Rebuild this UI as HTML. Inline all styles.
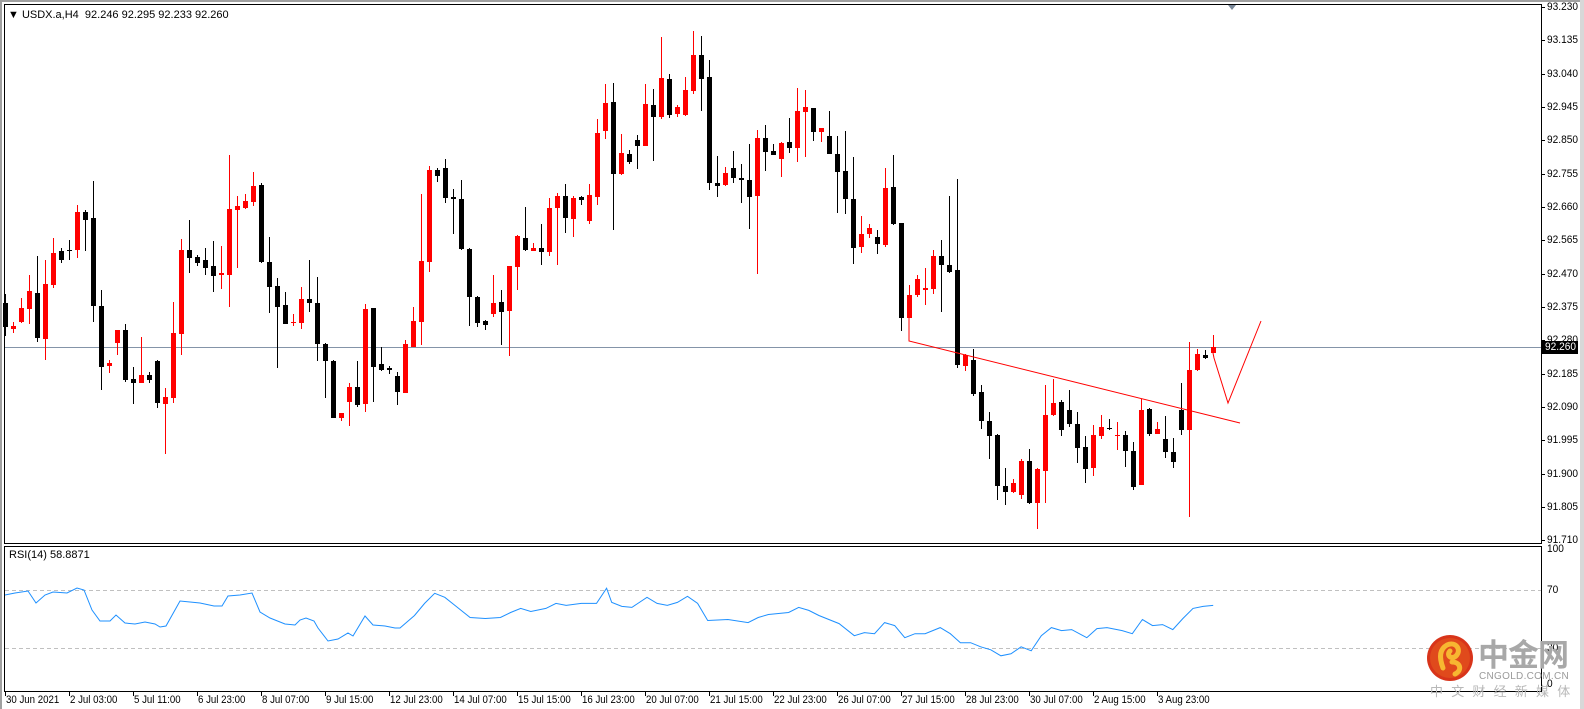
<!DOCTYPE html>
<html><head><meta charset="utf-8">
<style>
html,body{margin:0;padding:0;background:#fff;}
body{width:1584px;height:709px;position:relative;overflow:hidden;font-family:"Liberation Sans",sans-serif;}
.t{position:absolute;font-size:11px;color:#000;white-space:nowrap;line-height:12px;}
.pl{position:absolute;left:1547px;font-size:11px;line-height:12px;color:#000;transform:scaleX(0.92);transform-origin:0 0;}
.dl{position:absolute;top:694px;font-size:11px;line-height:12px;color:#000;white-space:nowrap;transform:scaleX(0.88);transform-origin:0 0;}
</style></head><body>
<svg id="s" width="1584" height="709" style="position:absolute;left:0;top:0" xmlns="http://www.w3.org/2000/svg">
<rect x="0" y="0" width="1584" height="2" fill="#a0a0a0"/>
<rect x="0" y="0" width="2" height="709" fill="#a0a0a0"/>
<rect x="1580" y="0" width="4" height="709" fill="#d8d8d8"/>
<rect x="4.5" y="4.5" width="1537" height="539" fill="none" stroke="#000"/>
<rect x="4.5" y="546.5" width="1537" height="145" fill="none" stroke="#000"/>
<line x1="5" y1="347.5" x2="1541" y2="347.5" stroke="#8494a8" stroke-width="1"/>
<polygon points="1228,5 1236,5 1232,10" fill="#7a8899"/>
<line x1="5" y1="590.5" x2="1541" y2="590.5" stroke="#c0c0c0" stroke-dasharray="4,3"/>
<line x1="5" y1="648.5" x2="1541" y2="648.5" stroke="#c0c0c0" stroke-dasharray="4,3"/>
<g id="c"></g>
<polyline points="909,318 909,341 1240,423" fill="none" stroke="#ff0000" stroke-width="1"/>
<polyline points="1213,353 1214,358 1228,403 1261,321" fill="none" stroke="#ff0000" stroke-width="1"/>
<polyline id="rsi" fill="none" stroke="#1e90ff" stroke-width="1"/>
<g id="ticks"></g>
<rect x="1542" y="341" width="36" height="13" fill="#000"/>
<circle cx="1450" cy="658" r="23" fill="#d8341a"/>
<circle cx="1450" cy="658" r="20" fill="#e04a1c"/>
<path d="M1443 668 C1440 660 1438 650 1447 645 C1456 641 1462 650 1456 656 C1451 660 1446 655 1450 651 M1452 662 C1460 662 1463 670 1455 674" fill="none" stroke="#f7b731" stroke-width="5" stroke-linecap="round"/>
</svg>
<div class="t" style="left:8px;top:9px">&#9660; USDX.a,H4&nbsp; 92.246 92.295 92.233 92.260</div>
<div class="t" style="left:9px;top:549px">RSI(14) 58.8871</div>
<div id="pls"></div>
<div class="pl" style="top:341px;color:#fff;left:1545px;">92.260</div>
<div class="pl" style="top:543px">100</div>
<div class="pl" style="top:584px">70</div>
<div class="pl" style="top:642px">30</div>
<div class="pl" style="top:678px">0</div>
<div style="position:absolute;left:1478px;top:636px;font-family:'Noto Sans CJK SC',sans-serif;font-size:31px;font-weight:bold;color:#a8a8a8;line-height:34px;letter-spacing:-1px">中金网</div>
<div style="position:absolute;left:1479px;top:671px;font-size:10px;color:#9a9a9a;line-height:11px;letter-spacing:0.3px">CNGOLD.COM.CN</div>
<div style="position:absolute;left:1430px;top:683px;font-family:'Noto Sans CJK SC',sans-serif;font-size:13px;color:#b8b8b8;line-height:15px;letter-spacing:8.2px">中文财经新媒体</div>
<div id="dls"></div>
<script>
var NS="http://www.w3.org/2000/svg";
function el(t,a,p){var e=document.createElementNS(NS,t);for(var k in a)e.setAttribute(k,a[k]);p.appendChild(e);return e;}
var g=document.getElementById('c');
var segs=[[140,[
[0,'k',462,588,490,562],[1,'r',545,578,558,566],[2,'r',474,550,504,546],[3,'r',405,552,453,507],[4,'k',348,606,459,594],[5,'r',360,660,432,597],[6,'r',294,444,339,435],[7,'k',324,369,333,360],[8,'k',300,360,329,332],[9,'r',195,354,216,330],[10,'k',210,333,216,240],[11,'k',123,546,234,498],[12,'k',450,750,498,681],[13,'r',660,699,669,678],[14,'r',570,645,570,609],[15,'k',552,726,570,720],[16,'k',681,792,717,729],[17,'r',591,729,705,729],[18,'k',696,729,705,720],[19,'k',660,804,663,789],[20,'r',744,942,771,792],[21,'r',486,789,579,774],[22,'r',297,645,330,582],[23,'k',240,399,330,354],[24,'k',345,378,351,369],[25,'k',324,405,360,384],[26,'k',303,456,378,408],[27,'r',318,447,399,405],[28,'r',45,501,207,405],[29,'r',168,384,198,210],[30,'r',162,207,183,204],[31,'r',96,198,138,186],[32,'k',129,369,135,366],[33,'k',291,519,366,441],[34,'k',414,684,438,501],[35,'k',456,552,495,552],[36,'r',522,558,546,549],[37,'r',441,567,477,549],[38,'k',360,516,477,489]]],
[30,[
[39,'k',741,993,819,942],[40,'k',939,1104,942,993],[41,'k',990,1164,993,1164],[42,'r',1149,1173,1149,1164],[43,'r',1059,1188,1071,1116],[44,'k',993,1131,1071,1125],[45,'r',822,1146,837,1122],[46,'k',834,1116,834,1011],[47,'k',951,1023,1002,1020],[48,'k',1008,1032,1014,1020],[49,'k',1026,1125,1038,1086],[50,'r',930,1089,942,1089],[51,'r',831,951,873,951],[52,'r',492,945,693,876],[53,'r',408,726,420,696],[54,'k',414,456,420,438],[55,'k',387,519,414,504],[56,'k',477,612,501,507],[57,'k',450,660,507,657],[58,'k',654,888,657,801],[59,'k',798,891,801,879],[60,'k',870,900,873,885],[61,'r',735,861,819,852],[62,'k',780,945,816,846],[63,'r',708,978,708,843],[64,'r',615,780,618,711],[65,'k',531,663,624,660],[66,'r',639,663,654,663],[67,'k',582,705,654,666],[68,'r',504,678,534,666],[69,'r',489,705,498,534],[70,'k',462,609,498,564],[71,'r',498,621,504,567],[72,'k',498,525,501,510],[73,'r',462,582,495,573],[74,'r',267,525,309,501],[75,'r',162,327,219,303],[76,'k',159,600,216,432],[77,'r',312,435,369,432]]],
[20,[
[78,'k',390,432,402,426],[79,'k',345,446,360,378],[80,'r',192,378,252,378],[81,'k',207,423,255,291],[82,'r',51,297,174,291],[83,'k',162,294,177,285],[84,'r',255,291,261,282],[85,'r',171,288,210,285],[86,'r',33,222,105,213],[87,'k',48,273,105,177],[88,'k',120,510,171,489],[89,'k',408,531,489,498],[90,'r',441,498,459,495],[91,'k',393,489,444,474],[92,'k',432,549,474,480],[93,'k',372,627,480,531],[94,'r',330,762,354,528],[95,'k',315,453,354,396],[96,'k',372,405,393,405],[97,'r',366,471,369,417],[98,'k',294,399,366,384],[99,'r',204,426,273,384],[100,'r',210,411,261,276],[101,'k',264,363,264,336],[102,'r',324,366,324,336],[103,'k',273,402,348,402],[104,'k',348,579,402,456],[105,'k',333,582,453,537],[106,'k',411,732,537,684],[107,'r',588,699,642,681],[108,'r',612,654,624,642],[109,'k',630,702,651,672],[110,'r',444,681,504,675],[111,'k',405,615,501,612]]],
[170,[
[112,'k',159,483,159,444],[113,'r',345,444,375,444],[114,'r',315,381,327,375],[115,'r',294,405,354,360],[116,'r',240,372,258,357],[117,'k',210,426,258,285],[118,'k',78,309,285,306],[119,'k',27,594,300,585],[120,'r',552,603,555,588],[121,'k',537,678,570,672],[122,'k',645,777,666,753],[123,'k',726,867,753,798],[124,'k',792,990,795,948],[125,'k',894,1005,948,966],[126,'r',927,969,939,966],[127,'r',867,987,873,975],[128,'k',837,1002,873,999],[129,'r',894,1077,897,999],[130,'r',645,999,735,903],[131,'r',627,738,699,735],[132,'k',690,798,696,780],[133,'k',660,771,720,762],[134,'k',726,879,762,834],[135,'k',798,939,831,897],[136,'r',765,918,795,894],[137,'r',735,807,771,798],[138,'k',747,780,774,777],[139,'r',756,840,795,798],[140,'k',783,891,795,843],[141,'k',816,960,843,951],[142,'r',687,945,720,945],[143,'k',714,798,717,792],[144,'r',756,792,777,792],[145,'k',738,864,807,846],[146,'k',804,894,846,876],[147,'k',639,795,720,780],[148,'r',516,1041,600,780],[149,'r',537,603,552,600],[150,'k',540,567,555,564],[151,'r',495,549,531,549]]]];
segs.forEach(function(s){var oy=s[0];s[1].forEach(function(c){
 var cx=Math.round(5.3+8*c[0]);var col=c[1]=='r'?'#ff0000':'#000000';
 var hy=Math.round(oy+c[2]/3),ly=Math.round(oy+c[3]/3),bt=Math.round(oy+c[4]/3),bb=Math.round(oy+c[5]/3);
 if(bb-bt<1)bb=bt+1;
 el('rect',{x:cx,y:hy,width:1,height:Math.max(1,ly-hy),fill:col},g);
 el('rect',{x:cx-2,y:bt,width:5,height:bb-bt,fill:col},g);
});});
var a=[[5,595],[15,593],[28,591],[36,603],[45,595],[53,592],[67,593],[77,588],[84,590],[92,610],[100,621],[110,621],[116,615],[125,623],[135,624],[145,622],[155,624],[160,627],[166,626],[180,601],[190,602],[200,603],[214,606],[222,606],[228,596],[240,595],[252,593],[260,612],[270,618],[285,624],[295,625],[300,620],[306,618],[314,621],[318,628],[328,641],[338,639],[348,633],[353,636],[365,616],[373,625],[385,626],[395,628],[400,628]];
var b=[[410,610],[420,598],[430,588],[440,592],[450,600],[465,612],[480,613],[495,612],[505,607],[515,603],[525,606],[540,603],[550,598],[560,600],[575,598],[590,598],[600,583],[605,597],[615,601],[625,602],[640,592],[650,598],[660,600],[670,597],[680,591],[690,598],[700,615],[720,614],[740,617],[750,612],[760,609],[780,607],[790,602],[800,605],[810,610],[830,618],[845,630],[855,627],[865,628],[875,617],[885,620],[895,632],[905,628],[915,628],[930,622],[940,628],[950,637],[960,637],[970,641],[980,644],[990,650],[1000,648],[1010,641],[1020,645],[1030,630],[1040,622],[1050,625],[1060,624],[1075,632],[1085,623],[1095,622],[1110,625],[1120,628],[1130,614],[1140,620],[1150,619],[1160,624],[1170,613],[1180,603],[1190,601],[1200,600]];
var pts=a.map(function(p){return p[0]+','+p[1];});
b.forEach(function(p){pts.push((p[0]*1.011).toFixed(1)+','+(p[1]*1.009).toFixed(1));});
document.getElementById('rsi').setAttribute('points',pts.join(' '));
var tk=document.getElementById('ticks');var html='';
for(var k=0;k<17;k++){var p=(93.230-0.095*k).toFixed(3);var y=7+k*33.33;
 el('line',{x1:1541,y1:Math.round(y)+0.5,x2:1545,y2:Math.round(y)+0.5,stroke:'#000'},tk);
 html+='<div class="pl" style="top:'+(Math.max(1,Math.round(y)-6))+'px">'+p+'</div>';}
document.getElementById('pls').innerHTML=html;
var d=['30 Jun 2021','2 Jul 03:00','5 Jul 11:00','6 Jul 23:00','8 Jul 07:00','9 Jul 15:00','12 Jul 23:00','14 Jul 07:00','15 Jul 15:00','16 Jul 23:00','20 Jul 07:00','21 Jul 15:00','22 Jul 23:00','26 Jul 07:00','27 Jul 15:00','28 Jul 23:00','30 Jul 07:00','2 Aug 15:00','3 Aug 23:00'];
var dh='';d.forEach(function(t,k){var x=5+64*k;el('line',{x1:x+0.5,y1:691,x2:x+0.5,y2:696,stroke:'#000'},tk);dh+='<div class="dl" style="left:'+(x+1)+'px">'+t+'</div>';});
document.getElementById('dls').innerHTML=dh;
</script>
</body></html>
